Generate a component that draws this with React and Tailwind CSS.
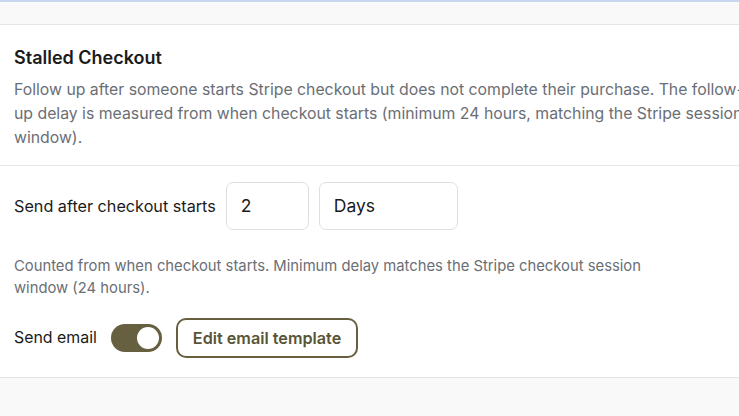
import React from "react";

const font = { fontFamily: "Inter, 'Liberation Sans', sans-serif" };

export default function App() {
  return (
    <div className="min-h-[416px] w-[739px] overflow-hidden bg-[#f9f9f9] border-t-2 border-[#c9d6ef]" style={font}>
      <div className="h-[23px] border-b border-[#e4e6e9]" />
      <section className="bg-white border-b border-[#e2e4e8]">
        <div className="pl-[14px] pt-[21px] pb-[15px] border-b border-[#e8e8e8] w-[800px]">
          <h2 className="text-[18px] leading-[24px] font-semibold text-[#1b1b1b]">Stalled Checkout</h2>
          <p className="mt-[8px] w-[734px] text-[15.8px] leading-[24px] text-[#6a6e75]">
            Follow up after someone starts Stripe checkout but does not complete their purchase. The follow-up delay is measured from when checkout starts (minimum 24 hours, matching the Stripe session window).
          </p>
        </div>
        <div className="px-[14px] pt-[16px] pb-[19px]">
          <div className="flex items-center">
            <span className="text-[16.2px] text-[#1b1b1b] mr-[10px]">Send after checkout starts</span>
            <div className="w-[83px] h-[48px] rounded-[7px] border border-[#dedfe2] flex items-center px-[14px] text-[17.5px] text-[#1b1b1b]">2</div>
            <div className="ml-[10px] w-[139px] h-[48px] rounded-[7px] border border-[#dedfe2] flex items-center px-[14px] text-[17.5px] text-[#1b1b1b]">Days</div>
          </div>
          <p className="mt-[25px] max-w-[640px] text-[14.8px] leading-[22px] text-[#6a6e75]">
            Counted from when checkout starts. Minimum delay matches the Stripe checkout session window (24 hours).
          </p>
          <div className="mt-[19px] flex items-center">
            <span className="text-[15.9px] text-[#1b1b1b]">Send email</span>
            <div className="ml-[14px] w-[51px] h-[28px] rounded-full bg-[#666040] flex items-center justify-end px-[3px]">
              <div className="w-[22px] h-[22px] rounded-full bg-white" />
            </div>
            <button className="ml-[14px] h-[40px] px-[15px] rounded-[10px] border-2 border-[#666040] text-[16.2px] font-semibold text-[#595436]">
              Edit email template
            </button>
          </div>
        </div>
      </section>
    </div>
  );
}
